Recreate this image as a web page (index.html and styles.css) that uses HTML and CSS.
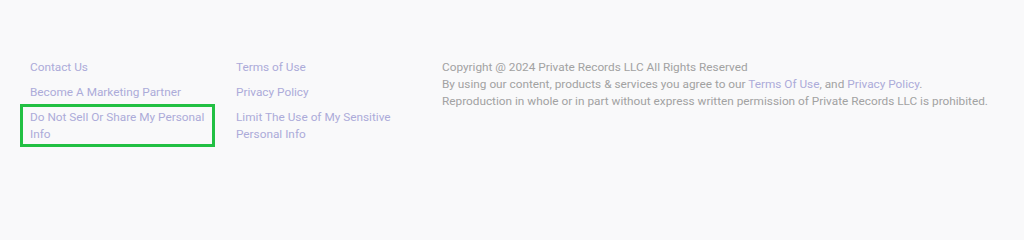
FILE: index.html
```html
<!DOCTYPE html>
<html lang="en">
<head>
<meta charset="utf-8">
<title>Footer</title>
<link rel="stylesheet" href="styles.css">
</head>
<body>
<footer class="footer">
  <ul class="col col-1">
    <li><a href="#">Contact Us</a></li>
    <li><a href="#">Become A Marketing Partner</a></li>
    <li><a href="#" class="highlight">Do Not Sell Or Share My Personal Info</a></li>
  </ul>
  <ul class="col col-2">
    <li><a href="#">Terms of Use</a></li>
    <li><a href="#">Privacy Policy</a></li>
    <li><a href="#">Limit The Use of My Sensitive Personal Info</a></li>
  </ul>
  <div class="legal">
    <p>Copyright @ 2024 Private Records LLC All Rights Reserved</p>
    <p>By using our content, products &amp; services you agree to our <a href="#">Terms Of Use</a>, and <a href="#">Privacy Policy</a>.</p>
    <p>Reproduction in whole or in part without express written permission of Private Records LLC is prohibited.</p>
  </div>
</footer>
</body>
</html>
```
FILE: styles.css
```css
html, body {
  margin: 0;
  padding: 0;
  background: #f9f9fa;
}
body {
  font-family: Roboto, "Liberation Sans", Arial, sans-serif;
  font-size: 11.8px;
  line-height: 17px;
  color: #a2a2a2;
  height: 227px;
  overflow: hidden;
}
.footer {
  display: flex;
  padding: 59px 0 0 30px;
}
.col {
  list-style: none;
  margin: 0;
  padding: 0;
  display: flex;
  flex-direction: column;
  gap: 8px;
}
.col-1 {
  width: 182px;
  margin-right: 24px;
}
.col-2 {
  width: 182px;
  margin-right: 24px;
}
a {
  color: #acabd9;
  text-decoration: none;
}
.highlight {
  position: relative;
  display: block;
}
.highlight::after {
  content: "";
  position: absolute;
  left: -10px;
  top: -5px;
  right: -3px;
  bottom: -4px;
  border: 3px solid #22c043;
  pointer-events: none;
}
.legal p {
  margin: 0;
}
```
